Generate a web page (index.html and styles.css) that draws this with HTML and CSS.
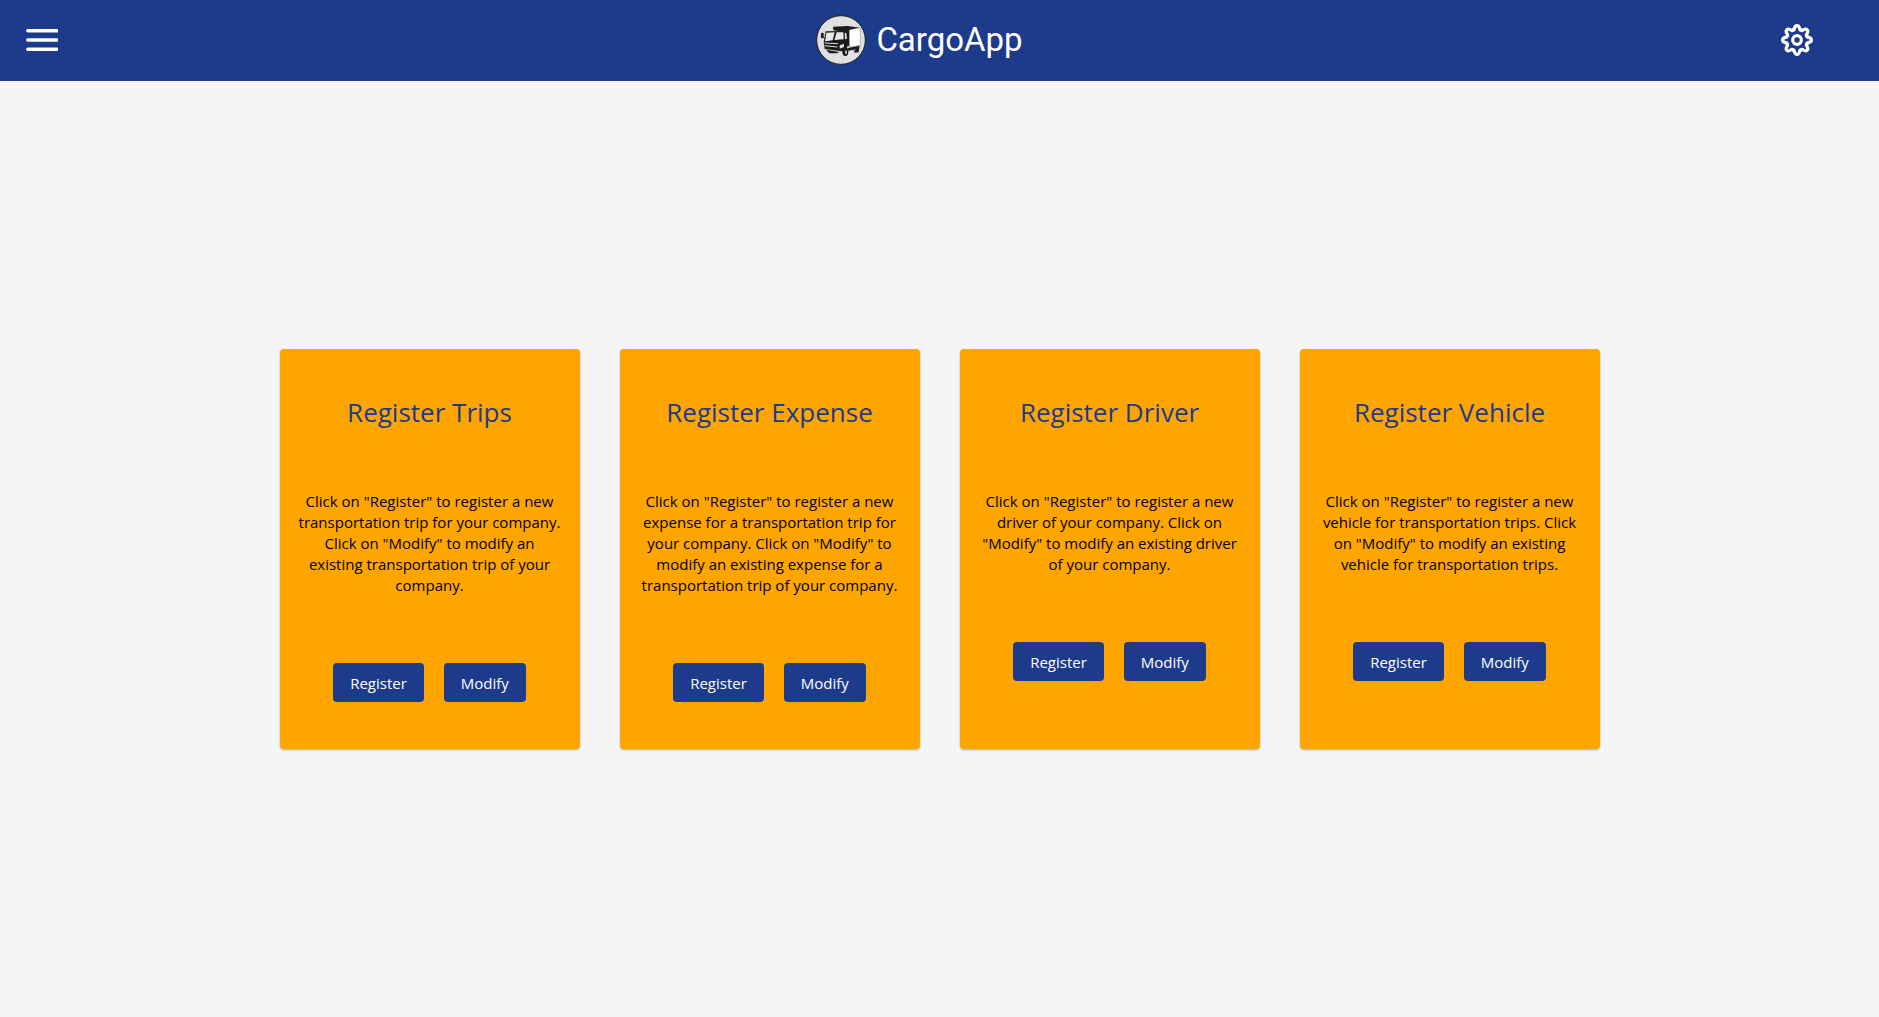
FILE: index.html
```html
<!DOCTYPE html>
<html lang="en">
<head>
<meta charset="utf-8">
<meta name="viewport" content="width=device-width, initial-scale=1">
<title>CargoApp</title>
<link rel="stylesheet" href="styles.css">
</head>
<body>
<header class="topbar">
  <button class="icon-button" type="button" aria-label="Open menu">
    <svg class="icon" viewBox="0 0 32 32" aria-hidden="true"><path d="M1.800 6.800h29M1.800 16h29M1.800 25.200h29" fill="none" stroke="currentColor" stroke-width="3.500" stroke-linecap="round"/></svg>
  </button>
  <a class="brand" href="#">
    <svg class="brand-logo" viewBox="12 13 150 150" aria-hidden="true">
      <circle cx="87" cy="88" r="73" fill="#e0e0e0" stroke="#222" stroke-width="3"/>
      <path d="M63 48l44-2 36 5-31 10v46l-10-4-4-38-34-6z" fill="#1b1b1b"/>
      <path d="M112 57l33-6v53l-32 5z" fill="#fff" stroke="#444" stroke-width="1"/>
      <path d="M41 62l61-1 7 38-8 24-63-8-3-21z" fill="#1b1b1b"/>
      <path d="M43 66l25-1-6 24-23 3zM74 65l20 0 1 21-28 2z" fill="#e8e8e8"/>
      <path d="M98 67l5 0 2 17-6 2z" fill="#ddd"/>
      <path d="M38 97l40 2M38 105l38 4" stroke="#ddd" stroke-width="3"/>
      <path d="M83 104l13-5v10l-13 5z" fill="#ddd"/>
      <rect x="27" y="66" width="8" height="17" rx="3" fill="#1b1b1b"/>
      <path d="M34 80l6 4" stroke="#1b1b1b" stroke-width="3"/>
      <ellipse cx="100" cy="123" rx="9" ry="13" fill="#1b1b1b"/>
      <ellipse cx="102" cy="125" rx="3" ry="6" fill="#bbb"/>
      <path d="M108 112l35-7-3 20-12 1-5-9-14 4z" fill="#1b1b1b"/>
      <ellipse cx="127" cy="119" rx="2" ry="4" fill="#aaa"/>
      <path d="M42 117l40 7-8 4H52z" fill="#1b1b1b"/>
    </svg>
    <span>CargoApp</span>
  </a>
  <button class="icon-button" type="button" aria-label="Settings">
    <svg class="icon" viewBox="-16 -16 32 32" fill="none" stroke="currentColor" stroke-width="3.200" stroke-linecap="round" aria-hidden="true">
      <defs><path id="tooth" d="M-4.130-9.980C-1.700-9-3.700-14.400 0-14.400S1.700-9 4.130-9.980"/></defs>
      <use href="#tooth"/>
      <use href="#tooth" transform="rotate(45)"/>
      <use href="#tooth" transform="rotate(90)"/>
      <use href="#tooth" transform="rotate(135)"/>
      <use href="#tooth" transform="rotate(180)"/>
      <use href="#tooth" transform="rotate(225)"/>
      <use href="#tooth" transform="rotate(270)"/>
      <use href="#tooth" transform="rotate(315)"/>
      <circle r="4.300"/>
    </svg>
  </button>
</header>
<main class="content">
  <section class="card">
    <h2 class="card-title">Register Trips</h2>
    <p class="card-text">Click on "Register" to register a new transportation trip for your company. Click on "Modify" to modify an existing transportation trip of your company.</p>
    <div class="card-actions"><button class="button" type="button">Register</button><button class="button" type="button">Modify</button></div>
  </section>
  <section class="card">
    <h2 class="card-title">Register Expense</h2>
    <p class="card-text">Click on "Register" to register a new expense for a transportation trip for your company. Click on "Modify" to modify an existing expense for a transportation trip of your company.</p>
    <div class="card-actions"><button class="button" type="button">Register</button><button class="button" type="button">Modify</button></div>
  </section>
  <section class="card">
    <h2 class="card-title">Register Driver</h2>
    <p class="card-text">Click on "Register" to register a new driver of your company. Click on "Modify" to modify an existing driver of your company.</p>
    <div class="card-actions"><button class="button" type="button">Register</button><button class="button" type="button">Modify</button></div>
  </section>
  <section class="card">
    <h2 class="card-title">Register Vehicle</h2>
    <p class="card-text">Click on "Register" to register a new vehicle for transportation trips. Click on "Modify" to modify an existing vehicle for transportation trips.</p>
    <div class="card-actions"><button class="button" type="button">Register</button><button class="button" type="button">Modify</button></div>
  </section>
</main>
</body>
</html>
```
FILE: styles.css
```css
* { box-sizing: border-box; }

body {
  display: flex;
  flex-direction: column;
  min-height: 100vh;
  margin: 0;
  background: #f5f5f5;
  color: #000;
  font-family: "Open Sans", "Noto Sans", sans-serif;
  font-size: 15px;
}

.topbar {
  display: flex;
  align-items: center;
  justify-content: space-between;
  height: 81px;
  padding: 0 66px 1px 26px;
  background: #1e3a8a;
  color: #fff;
}

.icon-button {
  display: flex;
  padding: 0;
  border: 0;
  background: none;
  color: inherit;
  cursor: pointer;
}

.icon { width: 32px; height: 32px; }

.brand {
  display: flex;
  align-items: center;
  gap: 10px;
  color: inherit;
  font-family: Roboto, sans-serif;
  font-size: 33px;
  line-height: 50px;
  text-decoration: none;
}

.brand-logo { width: 50px; height: 50px; }

.content {
  display: flex;
  flex: 1;
  flex-wrap: wrap;
  align-items: center;
  align-content: center;
  justify-content: center;
  gap: 40px;
}

.card {
  width: 300px;
  min-height: 400px;
  padding: 45px 18px;
  border-radius: 4px;
  background: #ffa500;
  box-shadow: 0 1px 2px rgba(0, 0, 0, 0.3);
  text-align: center;
}

.card-title {
  margin: 0 0 60px;
  color: #1e3a8a;
  font-size: 26px;
  font-weight: 400;
  line-height: 37px;
}

.card-text {
  margin: 0 0 67px;
  line-height: 21px;
}

.card-actions {
  display: flex;
  justify-content: center;
  gap: 20px;
}

.button {
  height: 39px;
  padding: 0 17px;
  border: 0;
  border-radius: 4px;
  background: #1e3a8a;
  color: #fff;
  font: inherit;
  cursor: pointer;
}
```
